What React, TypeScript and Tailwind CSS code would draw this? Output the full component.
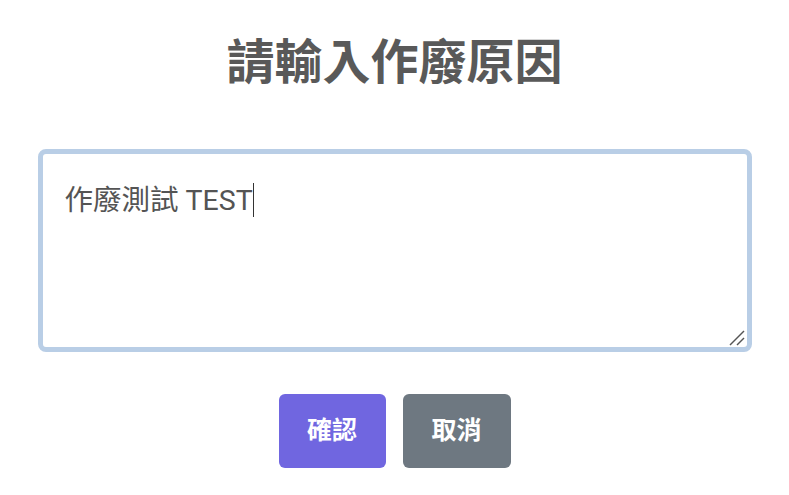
const value = "作廢測試 TEST";

export default function App() {
  return (
    <div className="w-[789px] h-[495px] bg-white flex flex-col items-center font-['Roboto','Noto_Sans_CJK_TC',sans-serif]">
      <h2 className="mt-[33px] text-[48px] leading-[60px] font-bold text-[#595959]">請輸入作廢原因</h2>

      <div className="relative mt-[56px]">
        <textarea
          defaultValue={value}
          className="block w-[714px] h-[203px] border-[5px] border-[#b9cee6] rounded-[8px] pt-[29px] px-[22px] text-[28.5px] leading-[36px] text-[#545454] outline-none resize-none"
        />
        {/* fake caret mirrored over the text */}
        <div className="pointer-events-none absolute left-[5px] top-[5px] pt-[29px] px-[22px] text-[28.5px] leading-[36px] whitespace-pre">
          <span className="invisible">{value}</span>
          <span className="inline-block w-[1.5px] h-[34px] bg-[#333] align-[-7px]" />
        </div>
        {/* resize grip */}
        <svg className="pointer-events-none absolute right-[7px] bottom-[6px]" width="16" height="16" viewBox="0 0 16 16">
          <line x1="1" y1="15" x2="15" y2="1" stroke="#555" strokeWidth="1.5" />
          <line x1="8" y1="15" x2="15" y2="8" stroke="#555" strokeWidth="1.5" />
        </svg>
      </div>

      <div className="mt-[42px] flex gap-[17px]">
        <button className="w-[107px] h-[74px] rounded-[6px] bg-[#7066e0] text-white text-[25px] font-bold">
          確認
        </button>
        <button className="w-[108px] h-[74px] rounded-[6px] bg-[#6e7881] text-white text-[25px] font-bold">
          取消
        </button>
      </div>
    </div>
  );
}
